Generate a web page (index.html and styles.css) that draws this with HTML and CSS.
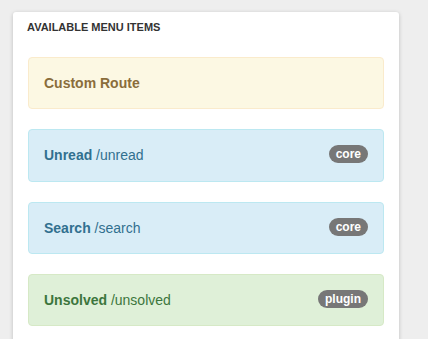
FILE: index.html
```html
<!DOCTYPE html>
<html lang="en">
<head>
  <meta charset="UTF-8" />
  <meta name="viewport" content="width=device-width, initial-scale=1.0"/>
  <title>Menu Items</title>
  <link rel="stylesheet" href="styles.css">
</head>
<body>

  <div class="panel">
    <h4 class="panel-title">Available Menu Items</h4>
    <div class="panel-body">
      <div class="alert alert-warning">
        <strong>Custom Route</strong>
      </div>
      <div class="alert alert-info">
        <span class="badge">core</span>
        <strong>Unread</strong> /unread
      </div>
      <div class="alert alert-info">
        <span class="badge">core</span>
        <strong>Search</strong> /search
      </div>
      <div class="alert alert-success">
        <span class="badge">plugin</span>
        <strong>Unsolved</strong> /unsolved
      </div>
    </div>
  </div>

</body>
</html>
```

FILE: styles.css
```css
body {
  margin: 0;
  font-family: "Liberation Sans", Arial, sans-serif;
  font-size: 14px;
  line-height: 20px;
  color: #333;
  background-color: #eeeeee;
}

.panel {
  margin: 12px 0 0 13px;
  width: 386px;
  background: white;
  border-radius: 3px;
  box-shadow: 0 1px 4px rgba(0, 0, 0, 0.2);
}

.panel-title {
  margin: 0;
  padding: 8px 14px 0;
  font-size: 11px;
  line-height: 15px;
  font-weight: bold;
  text-transform: uppercase;
  color: #333;
}

.panel-body {
  padding: 22px 15px 1px;
}

.alert {
  padding: 15px;
  margin-bottom: 20px;
  line-height: 20.33px;
  border: 1px solid transparent;
  border-radius: 4px;
}

.alert-warning {
  background-color: #fcf8e3;
  border-color: #faebcc;
  color: #8a6d3b;
}

.alert-info {
  background-color: #d9edf7;
  border-color: #bce8f1;
  color: #31708f;
}

.alert-success {
  background-color: #dff0d8;
  border-color: #d6e9c6;
  color: #3c763d;
}

.badge {
  float: right;
  padding: 3px 7px;
  font-size: 12px;
  font-weight: bold;
  line-height: 12px;
  color: white;
  background-color: #777;
  border-radius: 10px;
}
```
